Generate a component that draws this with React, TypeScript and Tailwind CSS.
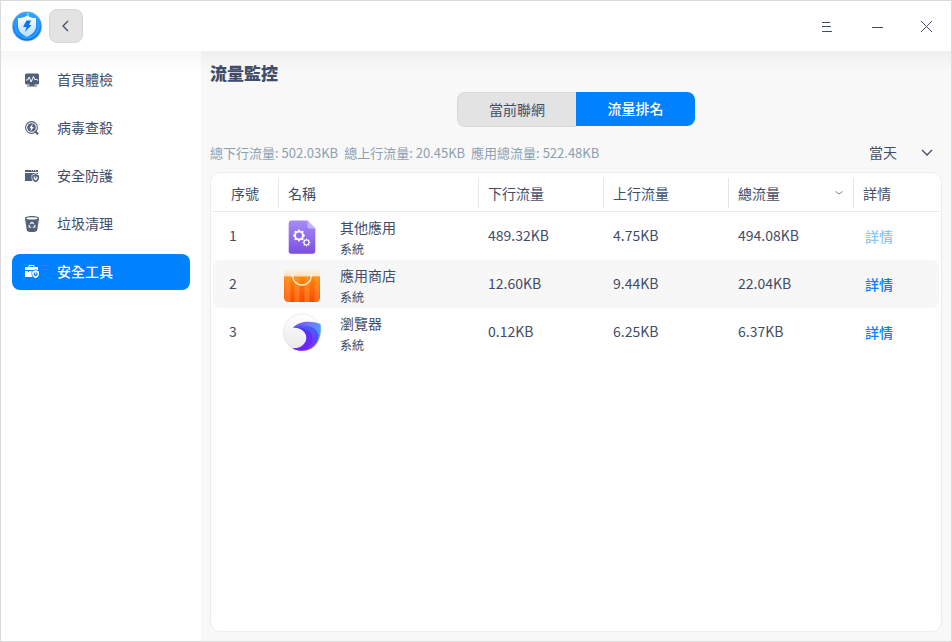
import type { ReactNode } from "react";

function Logo() {
  return (
    <svg viewBox="0 -1 32 32" className="size-8 shrink-0" aria-hidden="true">
      <defs>
        <linearGradient id="logoRing" x1="0" y1="0" x2="0" y2="1">
          <stop offset="0" stopColor="#3fa9fb" />
          <stop offset="1" stopColor="#0a6dfb" />
        </linearGradient>
        <linearGradient id="logoShield" x1="0" y1="0" x2="0" y2="1">
          <stop offset="0" stopColor="#ffffff" />
          <stop offset="1" stopColor="#b5defc" />
        </linearGradient>
      </defs>
      <circle cx="16" cy="15.500" r="15.300" fill="#d9dde2" />
      <circle cx="16" cy="15.300" r="14.500" fill="url(#logoRing)" />
      <circle cx="16" cy="15.300" r="11.500" fill="none" stroke="#27a0ff" strokeWidth="2" />
      <path d="M16 1.500h2v4.500h-2z" fill="#3fe0ff" />
      <path d="M16 4.500c2.600 2 5.600 2.500 9 2.500v8c0 5-3.500 8.500-9 11-5.500-2.500-9-6-9-11V7c3.400 0 6.400-.5 9-2.500z" fill="url(#logoShield)" />
      <path d="M15.500 9.500h4.500l-2 4.500h2.500L14 21l1.500-5H12z" fill="#0b72f5" />
    </svg>
  );
}

function PulseIcon() {
  return (
    <svg viewBox="0 0 14 14" className="size-3.5 shrink-0" aria-hidden="true">
      <rect x="0" y="0.500" width="14" height="11" rx="1.500" fill="currentColor" />
      <path d="M2 12.500h10v1H2zM4.500 11h5v2h-5z" fill="currentColor" />
      <path d="M1 7h1.500l1.700-3 2 5 2.200-5.500 1.800 3.500 1-1 .8 1H13" fill="none" stroke="#fff" strokeWidth="1" />
    </svg>
  );
}

function ScanIcon() {
  return (
    <svg viewBox="0 0 14 14" className="size-3.5 shrink-0" aria-hidden="true">
      <circle cx="6.500" cy="6.500" r="5.900" fill="none" stroke="currentColor" strokeWidth="1.100" />
      <circle cx="6.500" cy="6.500" r="4.300" fill="currentColor" />
      <path d="M7.800 2.500L4.300 7.200h1.800L5.400 10.800l3.400-4.900H7z" fill="#fff" />
      <path d="M10 10l3 3.200" stroke="currentColor" strokeWidth="2.200" />
    </svg>
  );
}

function Shield({ cutout }: { cutout: string }) {
  return (
    <>
      <path d="M10.600 4.300L14.600 6v3.200c0 2.200-1.600 3.700-4 4.800-2.400-1.100-4-2.600-4-4.800V6z" fill={cutout} />
      <path d="M10.600 5L14 6.400v2.700c0 1.900-1.400 3.200-3.400 4.200-2-1-3.400-2.300-3.400-4.200V6.400z" fill="currentColor" />
      <path d="M10.600 11.400c-1.200-.7-2-1.600-2-2.600 0-.9.600-1.400 1.200-1.400.4 0 .6.200.8.500.2-.3.400-.5.8-.5.600 0 1.200.5 1.200 1.400 0 1-.8 1.900-2 2.600z" fill={cutout} />
      <path d="M9.700 8.700l.9 1 .9-1v-.4h-1.800z" fill="currentColor" />
    </>
  );
}

function GuardIcon() {
  return (
    <svg viewBox="0 0 14 14" className="size-3.5 shrink-0 overflow-visible" aria-hidden="true">
      <path d="M0 1h13v2H0zM0 4h13v8H0z" fill="currentColor" />
      <path d="M6 1.700h1M8 1.700h1M10 1.700h1" stroke="#fff" strokeWidth=".8" />
      <Shield cutout="#fff" />
    </svg>
  );
}

function BinIcon() {
  return (
    <svg viewBox="0 0 14 16" className="h-4 w-3.5 shrink-0" aria-hidden="true">
      <path d="M0 2.200C0 1 2.500 0 7 0s7 1 7 2.200L12.200 14.500c0 .8-2 1.500-5.200 1.500s-5.200-.7-5.200-1.500z" fill="currentColor" />
      <ellipse cx="7" cy="2.400" rx="5.800" ry="1.200" fill="#fff" />
      <path d="M5.200 8L7 6.200 8.800 8M9.700 8.900l.2 2.200-2.200.1M4.300 8.900l-.2 2.200 2.200.1" fill="none" stroke="#fff" strokeWidth="1.100" />
    </svg>
  );
}

function ToolboxIcon() {
  return (
    <svg viewBox="0 0 14 14" className="size-3.5 shrink-0 overflow-visible" aria-hidden="true">
      <path d="M4 2.500V.5h5v2" fill="none" stroke="currentColor" strokeWidth="1" />
      <path d="M0 2h13v3H0zM0 6h3v1h1V6h5v6H0z" fill="currentColor" />
      <Shield cutout="#0081ff" />
    </svg>
  );
}

function gearPath(cx: number, cy: number, outer: number, inner: number) {
  const points: string[] = [];
  for (let i = 0; i < 32; i++) {
    const radius = i % 4 < 2 ? outer : inner;
    const angle = (i / 32) * Math.PI * 2 - Math.PI / 32;
    points.push(`${(cx + radius * Math.cos(angle)).toFixed(2)} ${(cy + radius * Math.sin(angle)).toFixed(2)}`);
  }
  return `M${points.join("L")}z`;
}

function OtherAppIcon() {
  return (
    <svg viewBox="0 0 40 40" className="size-10" aria-hidden="true">
      <defs>
        <linearGradient id="docFill" x1="0" y1="0" x2="0" y2="1">
          <stop offset="0" stopColor="#a78bfa" />
          <stop offset="1" stopColor="#7c4fe0" />
        </linearGradient>
      </defs>
      <path d="M9 4.500h16l8.500 8V34c0 1.900-1 3.200-3 3.200H9.500c-2 0-3-1.200-3-3.200V7C6.500 5.400 7.400 4.500 9 4.500z" fill="#e2daf5" />
      <path d="M9.300 3.500H25.500L33.200 11.500v22.700c0 1.500-1 2.500-2.500 2.500H9.300c-1.500 0-2.500-1-2.500-2.500V6c0-1.500 1-2.500 2.500-2.500z" fill="url(#docFill)" />
      <path d="M25.500 3.500l7.700 8h-5.700c-1.300 0-2-.7-2-2z" fill="#c4b2fa" />
      <path d={gearPath(17, 18.500, 6, 4.800)} fill="#fff" />
      <circle cx="17" cy="18.500" r="3" fill="#916bec" />
      <path d={gearPath(24.500, 25.500, 3.900, 3)} fill="#fff" />
      <circle cx="24.500" cy="25.500" r="1.900" fill="#8860e6" />
    </svg>
  );
}

function StoreIcon() {
  return (
    <svg viewBox="0 0 40 40" className="size-10" aria-hidden="true">
      <defs>
        <linearGradient id="bagFill" x1="0" y1="0" x2="0" y2="1">
          <stop offset="0" stopColor="#ff8a05" />
          <stop offset="1" stopColor="#ff4505" />
        </linearGradient>
        <linearGradient id="bagTop" x1="0" y1="0" x2="0" y2="1">
          <stop offset="0" stopColor="#f8f8f8" />
          <stop offset="1" stopColor="#fddfb8" />
        </linearGradient>
      </defs>
      <path d="M2 3h36v9H2z" fill="url(#bagTop)" />
      <path d="M2 11.500h36v20.500c0 3-2 5-4.500 5h-27C4 37 2 35 2 32z" fill="url(#bagFill)" />
      <path d="M2.500 11.500h6V37h-2c-2.500 0-4-2-4-4.500zM12.500 11.500h5V37h-5zM22.500 11.500h5V37h-5zM32.500 11.500h5V32c0 3-2 4.500-5 5z" fill="#ffa64d" opacity=".4" />
      <path d="M10.500 9.500c0 6.500 4.200 10.500 9.500 10.500s9.500-4 9.500-10.500" fill="none" stroke="#fce6c8" strokeWidth="1.400" />
      <circle cx="10.500" cy="10" r="1" fill="#fff" />
      <circle cx="29.500" cy="10" r="1" fill="#fff" />
    </svg>
  );
}

function BrowserIcon() {
  return (
    <svg viewBox="0 0 40 40" className="size-10" aria-hidden="true">
      <defs>
        <linearGradient id="discFill" x1="0" y1="0" x2="0" y2="1">
          <stop offset="0" stopColor="#ffffff" />
          <stop offset="1" stopColor="#e8e8ea" />
        </linearGradient>
        <linearGradient id="swooshOuter" x1="0" y1="0" x2="1" y2="0.300">
          <stop offset="0" stopColor="#7848e8" />
          <stop offset=".6" stopColor="#7776f8" />
          <stop offset="1" stopColor="#43a2fb" />
        </linearGradient>
        <linearGradient id="swooshInner" x1="0" y1="0" x2="0" y2="1">
          <stop offset="0" stopColor="#3d63ff" />
          <stop offset="1" stopColor="#8b25f7" />
        </linearGradient>
      </defs>
      <circle cx="20" cy="19.500" r="18.600" fill="url(#discFill)" stroke="#e2e2e4" strokeWidth=".7" />
      <path d="M11 14.500C17 8.500 28 7 38.500 11c1 6.500 0 16-6 22C26 39 15 38.500 10.500 35.500 17 37 24 32 24.500 25c0-6-5.500-10.500-13.500-10.500z" fill="url(#swooshOuter)" />
      <path d="M11 14.500c10-4 24-2 25.500 7.500 0 8-6.500 14.500-14 15.500-4.500.5-9-.2-12-2.500C18 36.500 24.500 31 24.500 25c0-6-5.500-10.500-13.500-10.500z" fill="url(#swooshInner)" />
      <path d="M15 14.500c9 0 15.500 4 15.500 11 0 6-4 10.500-9.500 11.500-4 .5-7.500-.3-10.500-2C18 36 24.500 31 24.500 25c0-5-3.500-9-9.500-10.500z" fill="#641ef5" opacity=".6" />
    </svg>
  );
}

function Chevron({ className }: { className: string }) {
  return (
    <svg viewBox="0 0 12 8" className={className} fill="none" stroke="currentColor" strokeWidth="1.300" aria-hidden="true">
      <path d="M1 1l5 5 5-5" />
    </svg>
  );
}

const navItems: { label: string; icon: ReactNode; active?: boolean }[] = [
  { label: "首頁體檢", icon: <PulseIcon /> },
  { label: "病毒查殺", icon: <ScanIcon /> },
  { label: "安全防護", icon: <GuardIcon /> },
  { label: "垃圾清理", icon: <BinIcon /> },
  { label: "安全工具", icon: <ToolboxIcon />, active: true },
];

const rows: { name: string; icon: ReactNode; down: string; up: string; total: string; faded?: boolean }[] = [
  { name: "其他應用", icon: <OtherAppIcon />, down: "489.32KB", up: "4.75KB", total: "494.08KB", faded: true },
  { name: "應用商店", icon: <StoreIcon />, down: "12.60KB", up: "9.44KB", total: "22.04KB" },
  { name: "瀏覽器", icon: <BrowserIcon />, down: "0.12KB", up: "6.25KB", total: "6.37KB" },
];

function HeadCell({ label, first, last, sorted }: { label: string; first?: boolean; last?: boolean; sorted?: boolean }) {
  return (
    <th scope="col" className="h-[39px] border-b border-[#ebebeb] p-0 pt-0.5 text-left font-normal">
      <div
        className={`flex h-[30px] items-center justify-between pr-2.5 ${first ? "pl-[18px]" : "pl-[9px]"} ${last ? "" : "border-r border-[#e6e6e6]"}`}
      >
        {label}
        {sorted && (
          <svg viewBox="0 0 8 4" className="h-1 w-2" fill="none" stroke="#7c8399" aria-hidden="true">
            <path d="M.5 .5L4 3 7.500 .5" />
          </svg>
        )}
      </div>
    </th>
  );
}

export default function App() {
  return (
    <div className="flex h-screen flex-col border border-[#dcdcdc] bg-white font-['Noto_Sans_CJK_TC','Noto_Sans_CJK_SC',sans-serif] text-sm text-[#414d68]">
      <header className="flex h-[50px] shrink-0 items-center justify-between bg-white pr-4 pl-2.5">
        <div className="flex items-center gap-1.5">
          <Logo />
          <button
            type="button"
            aria-label="返回"
            className="flex size-[34px] items-center justify-center rounded-lg border border-[#d6d6d6] bg-[#e3e3e3]"
          >
            <svg viewBox="0 0 8 12" className="h-3 w-2" fill="none" stroke="currentColor" strokeWidth="1.300" aria-hidden="true">
              <path d="M6 1L1 6l5 5" />
            </svg>
          </button>
        </div>
        <div className="flex items-center gap-[34px]">
          <button type="button" aria-label="選單" className="flex size-4 items-center justify-center">
            <svg viewBox="0 0 16 16" className="size-4" stroke="currentColor" aria-hidden="true">
              <path d="M3 4.500h8M3 8.500h9M3 13.500h10" />
            </svg>
          </button>
          <button type="button" aria-label="最小化" className="flex size-4 items-center justify-center">
            <svg viewBox="0 0 16 16" className="size-4" stroke="currentColor" aria-hidden="true">
              <path d="M3 9.500h11" />
            </svg>
          </button>
          <button type="button" aria-label="關閉" className="flex size-4 items-center justify-center">
            <svg viewBox="0 0 16 16" className="size-4" stroke="currentColor" aria-hidden="true">
              <path d="M2 3l11 11M13 3L2 14" />
            </svg>
          </button>
        </div>
      </header>

      <div className="flex min-h-0 flex-1">
        <nav className="flex w-[200px] shrink-0 flex-col gap-3 bg-linear-to-b from-[#f7f7f7] to-white to-[20px] px-[11px] pt-[11px]">
          {navItems.map((item) => (
            <button
              key={item.label}
              type="button"
              aria-current={item.active ? "page" : undefined}
              className={`flex h-9 items-center gap-[18px] rounded-lg px-[13px] ${
                item.active ? "bg-[#0081ff] font-medium text-white" : "text-[#526079]"
              }`}
            >
              {item.icon}
              <span className={item.active ? "pb-0.5" : "pb-0.5 text-[#414d68]"}>{item.label}</span>
            </button>
          ))}
        </nav>

        <main className="flex min-w-0 flex-1 flex-col bg-linear-to-b from-[#efefef] to-[#f8f8f8] to-[20px] pt-2.5 pr-[9px] pb-[9px] pl-[9px]">
          <h1 className="text-[17px] leading-6 font-black">流量監控</h1>

          <div className="mt-[7px] grid h-[35px] w-[238px] grid-cols-2 self-center">
            <button type="button" className="rounded-l-lg border border-r-0 border-[#d9d9d9] bg-[#e3e3e3] pb-0.5">
              當前聯網
            </button>
            <button type="button" className="mb-px rounded-r-lg bg-[#0081ff] pb-0.5 font-medium text-white">
              流量排名
            </button>
          </div>

          <div className="mt-3.5 flex h-6 items-center justify-between">
            <p className="flex gap-1.5 text-[13px] text-[#8aa1b4]">
              <span>總下行流量: 502.03KB</span>
              <span>總上行流量: 20.45KB</span>
              <span>應用總流量: 522.48KB</span>
            </p>
            <div className="relative">
              <select aria-label="統計時間" className="block h-6 w-[73px] appearance-none bg-transparent pb-0.5 text-sm" defaultValue="day">
                <option value="day">當天</option>
                <option value="month">當月</option>
              </select>
              <Chevron className="pointer-events-none absolute top-2 right-[9px] h-2 w-3" />
            </div>
          </div>

          <section className="mt-[7px] flex-1 rounded-[10px] border border-[#ededed] bg-white px-0.5">
            <table className="w-full table-fixed border-separate border-spacing-0">
              <colgroup>
                <col className="w-[66px]" />
                <col className="w-[200px]" />
                <col className="w-[125px]" />
                <col className="w-[125px]" />
                <col className="w-[125px]" />
                <col />
              </colgroup>
              <thead>
                <tr>
                  <HeadCell label="序號" first />
                  <HeadCell label="名稱" />
                  <HeadCell label="下行流量" />
                  <HeadCell label="上行流量" />
                  <HeadCell label="總流量" sorted />
                  <HeadCell label="詳情" last />
                </tr>
              </thead>
              <tbody>
                {rows.map((row, index) => (
                  <tr key={row.name} className="even:bg-[#f7f7f7] even:*:first:rounded-l-lg even:*:last:rounded-r-lg">
                    <td className="h-12 p-0 pb-0.5 pl-4">{index + 1}</td>
                    <td className="h-12 p-0 pt-0.5 pl-[3px]">
                      <div className="flex items-center gap-[18px]">
                        {row.icon}
                        <div>
                          <div className="leading-6">{row.name}</div>
                          <div className="text-xs leading-5">系統</div>
                        </div>
                      </div>
                    </td>
                    <td className="h-12 p-0 pb-0.5 pl-[9px]">{row.down}</td>
                    <td className="h-12 p-0 pb-0.5 pl-[9px]">{row.up}</td>
                    <td className="h-12 p-0 pb-0.5 pl-[9px]">{row.total}</td>
                    <td className="h-12 p-0 pl-[11px]">
                      <a href="#detail" className={`font-medium ${row.faded ? "text-[#8ac5ff]" : "text-[#0081ff]"}`}>
                        詳情
                      </a>
                    </td>
                  </tr>
                ))}
              </tbody>
            </table>
          </section>
        </main>
      </div>
    </div>
  );
}
